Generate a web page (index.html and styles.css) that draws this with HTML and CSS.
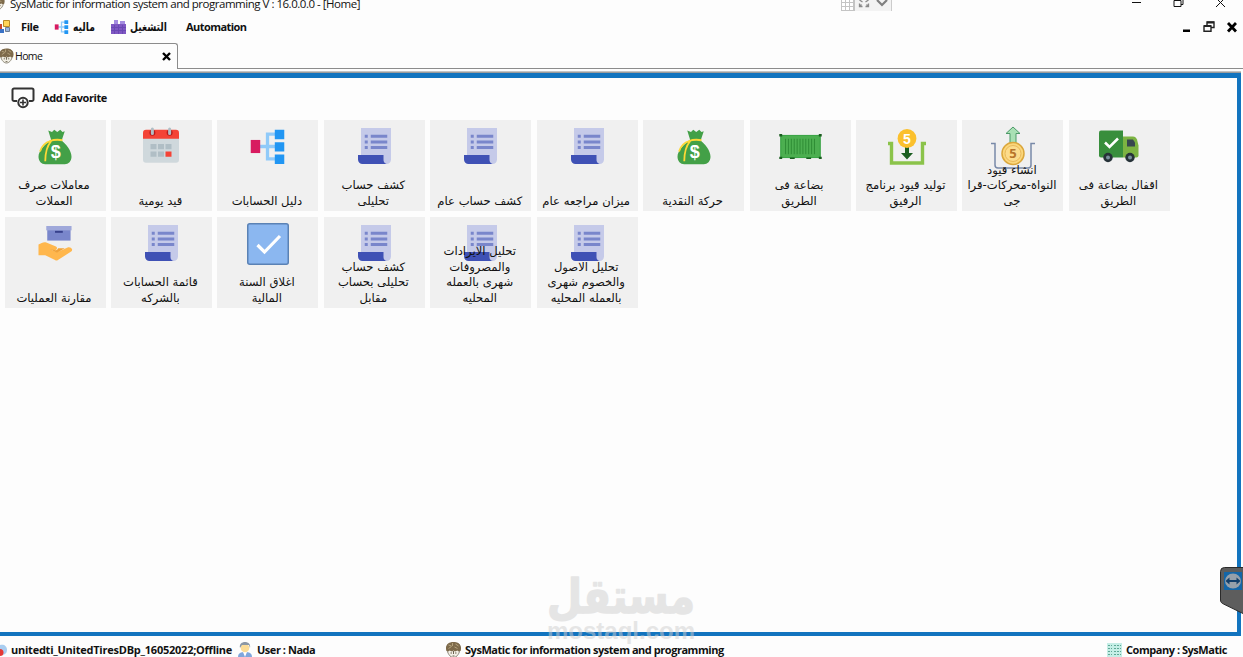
FILE: index.html
```html
<!DOCTYPE html>
<html lang="en">
<head>
  <meta charset="UTF-8" />
  <meta name="viewport" content="width=device-width, initial-scale=1.0" />
  <title>SysMatic - Home</title>
  <link rel="stylesheet" href="styles.css">
</head>
<body>
  <!-- shared icons -->
  <svg class="sprite" width="0" height="0">
    <symbol id="i-bag" viewBox="0 0 48 48">
      <path fill="#43a047" d="M15 2l5 2 3-3 4 3 4-3 3 3 3-1-4 12H19zM19 14h12c8 6 15 15 15 23 0 6-4 10-9 10H11c-5 0-9-4-9-10 0-8 9-17 17-23z"/>
      <path fill="none" stroke="#fdd835" stroke-width="2.400" d="M17 16c6-2 12-2 17-1M19 16c-6 7-8 15-8 27M18 16C11 18 6 23 4 30"/>
      <text x="25" y="39" text-anchor="middle" class="bag-sign">$</text>
    </symbol>
    <symbol id="i-calendar" viewBox="0 0 48 48">
      <path fill="#cfd8dc" d="M0 14h48v29a4 4 0 0 1-4 4H4a4 4 0 0 1-4-4z"/>
      <path fill="#f44336" d="M0 15V7a4 4 0 0 1 4-4h40a4 4 0 0 1 4 4v8z"/>
      <circle cx="12.500" cy="7" r="4" fill="#b71c1c"/><circle cx="35.500" cy="7" r="4" fill="#b71c1c"/>
      <path stroke="#b0bec5" stroke-width="4" stroke-linecap="round" d="M12.500 2v6M35.500 2v6"/>
      <path fill="#b0bec5" d="M10 22h8v7h-8zM20 22h8v7h-8zM30 22h8v7h-8zM10 32h8v7h-8zM20 32h8v7h-8z"/>
      <path fill="#f44336" d="M30 32h8v7h-8z"/>
    </symbol>
    <symbol id="i-tree" viewBox="0 0 48 48">
      <path fill="none" stroke="#90caf9" stroke-width="4.500" d="M12 24h24M36 7H24v34h12"/>
      <path fill="#d81b60" d="M1 15h13v18H1z"/>
      <path fill="#2196f3" d="M34 1h13v13H34zM34 18h13v13H34zM34 35h13v13H34z"/>
    </symbol>
    <symbol id="i-script" viewBox="0 0 44 48">
      <path fill="#c5cae9" d="M4 0h40v42a6 6 0 0 1-6 6H10L4 38z"/>
      <path fill="#3f51b5" d="M0 36h34v6a6 6 0 0 0 4 6H6a6 6 0 0 1-6-6z"/>
      <path fill="#7986cb" d="M9 9h4v4H9zM17 9h22v4H17zM9 16.500h4v4H9zM17 16.500h22v4H17zM9 24h4v4H9zM17 24h22v4H17z"/>
    </symbol>
    <symbol id="i-container" viewBox="0 0 44 28">
      <path fill="#4caf50" stroke="#2e9e3a" stroke-width="1" d="M1.500 2.500h41v23h-41z"/>
      <path stroke="#2e8b34" stroke-width="1" d="M6.500 6v16M9.500 6v16M12.500 6v16M15.500 6v16M18.500 6v16M21.500 6v16M24.500 6v16M27.500 6v16M30.500 6v16M33.500 6v16M36.500 6v16"/>
      <path fill="#1b5e20" d="M0 1h3v2.500H0zM41 1h3v2.500h-3zM0 24.500h3V27H0zM41 24.500h3V27h-3zM11 25.500h5V27h-5zM28 25.500h5V27h-5z"/>
    </symbol>
    <symbol id="i-income" viewBox="0 0 38 36">
      <path fill="none" stroke="#8bc34a" stroke-width="3.400" d="M0 14.500h3.500V34h31V14.500H38"/>
      <path fill="#1b5e20" d="M17 17h4v7h4l-6 6.500L13 24h4z"/>
      <circle cx="19" cy="9.500" r="9.400" fill="#fbc02d"/>
      <text x="19" y="14.500" text-anchor="middle" class="coin-five">5</text>
    </symbol>
    <symbol id="i-outcome" viewBox="0 0 44 44">
      <path fill="none" stroke="#7889a8" stroke-width="1.500" d="M0 17.500h4V39c0 2 1 3 3 3h30c2 0 3-1 3-3V17.500h4"/>
      <path fill="#a9e0b4" stroke="#4c9a68" d="M22 1l7 6.500h-4V17h-6V7.500h-4z"/>
      <circle cx="22" cy="27.500" r="11" fill="#fbd77c" stroke="#dba73c" stroke-width="1.500"/>
      <circle cx="22" cy="27.500" r="8" fill="#fcdc8c" stroke="#e9b95a"/>
      <text x="22" y="32" text-anchor="middle" class="coin-brown">5</text>
    </symbol>
    <symbol id="i-truck" viewBox="0 0 40 32">
      <path fill="#388e3c" d="M2 0h22v27H2a2 2 0 0 1-2-2V2a2 2 0 0 1 2-2z"/>
      <path fill="#7cb342" d="M24 6h10c2 0 3 1 4 3l1.500 6V25a2 2 0 0 1-2 2H24z"/>
      <path fill="#37474f" d="M28 9h6l2 3v4h-8z"/>
      <path fill="none" stroke="#fff" stroke-width="2.500" d="M6 12l4.500 4.500L19 8"/>
      <circle cx="9" cy="27" r="4.700" fill="#263238"/><circle cx="9" cy="27" r="2" fill="#78909c"/>
      <circle cx="31" cy="27" r="4.700" fill="#263238"/><circle cx="31" cy="27" r="2" fill="#78909c"/>
    </symbol>
    <symbol id="i-hand" viewBox="0 0 35 36">
      <path fill="#7986cb" d="M9 3h24v12H9z"/><path fill="#9fa8da" d="M8 0h26v4.500H8z"/>
      <path fill="#37418c" d="M17 5h8v2h-8z"/>
      <path fill="#ffb74d" d="M0 19c3-1 5-3 8-2l10 4c2 1 1 4-1 4l-4-.5 6 2.500 11-5c3-1 6 2 4 4L20 35c-1 .7-2 .7-3 0L7 30H0z"/>
      <path fill="#f0a238" d="M12 24l6 1c1 0 2-1 2-2l7 0-8 4.500z"/>
    </symbol>
    <symbol id="i-check" viewBox="0 0 42 42">
      <rect x=".75" y=".75" width="40.500" height="40.500" rx="2" fill="#8bb7f0" stroke="#5a82b5" stroke-width="1.500"/>
      <path fill="none" stroke="#fff" stroke-width="3.200" d="M10.500 22l7 7L33 13"/>
    </symbol>
    <symbol id="i-face" viewBox="0 0 16 16">
      <path fill="#f3f0e6" stroke="#8c8678" d="M1.500 6c0 5 3 9.500 6.500 9.500s6.500-4.500 6.500-9.500-3-5-6.500-5-6.500 1-6.500 5z"/>
      <path fill="#7d6a4b" d="M1 9C-1 3 3 0 8 0s9 3 7 9l-2 .5-1-1-2.500 1L8 8.500 6.500 9.500 4 8.500l-1 1z"/>
      <path stroke="#cdbb92" fill="none" stroke-width=".7" d="M3 3l3 1M10 2l3 2M7 1v3M3 6.500l3-2M9 5l3 1.500"/>
      <path stroke="#6b6250" fill="none" d="M8 9v3M5 11h1.500M9.500 11H11M7 14h2"/>
    </symbol>
  </svg>

  <header class="titlebar">
    <svg class="title-face"><use href="#i-face"/></svg>
    <span class="title-text">SysMatic for information system and programming V : 16.0.0.0 - [Home]</span>
    <div class="remote-bar">
      <svg width="51" height="11" viewBox="0 0 51 11">
        <path fill="#c4c4c4" d="M0 0h14v11H0z"/>
        <path fill="#fff" d="M1 0h3v2H1zM5 0h3v2H5zM9 0h3v2H9zM1 3h3v3H1zM5 3h3v3H5zM9 3h3v3H9zM1 7h3v3H1zM5 7h3v3H5zM9 7h3v3H9z"/>
        <path fill="none" stroke="#8a8a8a" stroke-width="1.300" d="M18.500 3.500v3h3M27.500 3.500v3h-3M18.500 0l3 2M27.500 0l-3 2M18.500 6.500l2-2M27.500 6.500l-2-2"/>
        <path fill="none" stroke="#808080" stroke-width="2.200" d="M36 0l5 5 5-5"/>
        <path stroke="#ccc" d="M50.500 0v11"/>
      </svg>
    </div>
    <svg class="window-buttons" width="94" height="9" viewBox="0 0 94 9">
      <path fill="none" stroke="#111" d="M0 2.500h9M42 .5h7v6h-7zM44 .5V0M49 4.500h2V0M84 -2l9 9M93-2l-9 9"/>
    </svg>
  </header>

  <nav class="menubar">
    <svg class="menu-app" width="10" height="13" viewBox="0 0 10 13">
      <path fill="#ffd457" stroke="#b98b25" d="M3.500.5h6v6h-6z"/><path fill="#c6452d" d="M0 4h2v6H0z"/>
      <path fill="#3b73c6" d="M0 9h4v4H0z"/><path fill="#9ab7de" stroke="#6f7f96" d="M5.500 7.500h4v4h-4z"/>
    </svg>
    <span class="menu-item m-file">File</span>
    <svg class="menu-tree" width="15" height="14"><use href="#i-tree"/></svg>
    <span class="menu-item ar m-money">ماليه</span>
    <svg class="menu-run" width="15" height="14" viewBox="0 0 15 14">
      <path fill="#a48ce0" d="M3 0h4v4H3zM9 1h5v4H9z"/><path fill="#7e57c2" d="M0 4h15v10H0z"/>
      <path stroke="#6a48b4" d="M0 7.500h15M0 10.500h15M3.500 5v9M7.500 5v9M11.500 5v9"/>
    </svg>
    <span class="menu-item ar m-run">التشغيل</span>
    <span class="menu-item m-auto">Automation</span>
    <svg class="mdi-buttons" width="54" height="12" viewBox="0 0 54 12">
      <path fill="#000" d="M0 8.500h7V11H0z"/>
      <path fill="none" stroke="#222" stroke-width="1.400" d="M21 5h7v5.300h-7zM24 4V1h7v5.500h-2.500"/>
      <path stroke="#222" stroke-width="2" d="M21 5h7M24 1.500h7"/>
      <path stroke="#000" stroke-width="2.800" d="M45 2l8 8.500M53 2l-8 8.500"/>
    </svg>
  </nav>

  <div class="tabs">
    <div class="tab">
      <svg class="tab-face"><use href="#i-face"/></svg>
      <span class="tab-name">Home</span>
      <svg class="tab-close" width="9" height="9" viewBox="0 0 9 9"><path stroke="#000" stroke-width="2.400" d="M1 1l7 7M8 1L1 8"/></svg>
    </div>
  </div>

  <main class="workspace">
    <div class="favorite">
      <svg width="24" height="22" viewBox="0 0 24 22">
        <path fill="none" stroke="#333" stroke-width="2" d="M6 14H3a1.500 1.500 0 0 1-1.500-1.500V3A1.500 1.500 0 0 1 3 1.500h18A1.500 1.500 0 0 1 22.500 3v9.500A1.500 1.500 0 0 1 21 14h-3"/>
        <circle cx="12" cy="15.500" r="4.700" fill="#fff" stroke="#333" stroke-width="2"/>
        <path stroke="#333" stroke-width="1.600" d="M12 12.500v6M9 15.500h6"/>
      </svg>
      <span>Add Favorite</span>
    </div>

    <div class="tiles">
      <div class="tile"><svg class="ic-bag"><use href="#i-bag"/></svg><p>معاملات صرف<br>العملات</p></div>
      <div class="tile"><svg class="ic-calendar"><use href="#i-calendar"/></svg><p>قيد يومية</p></div>
      <div class="tile"><svg class="ic-tree"><use href="#i-tree"/></svg><p>دليل الحسابات</p></div>
      <div class="tile"><svg class="ic-script"><use href="#i-script"/></svg><p>كشف حساب<br>تحليلى</p></div>
      <div class="tile"><svg class="ic-script"><use href="#i-script"/></svg><p>كشف حساب عام</p></div>
      <div class="tile"><svg class="ic-script"><use href="#i-script"/></svg><p>ميزان مراجعه عام</p></div>
      <div class="tile"><svg class="ic-bag"><use href="#i-bag"/></svg><p>حركة النقدية</p></div>
      <div class="tile"><svg class="ic-container"><use href="#i-container"/></svg><p>بضاعة فى<br>الطريق</p></div>
      <div class="tile"><svg class="ic-income"><use href="#i-income"/></svg><p>توليد قيود برنامج<br>الرفيق</p></div>
      <div class="tile"><svg class="ic-outcome"><use href="#i-outcome"/></svg><p>انشاء قيود<br>النواة-محركات-قرا<br>جى</p></div>
      <div class="tile"><svg class="ic-truck"><use href="#i-truck"/></svg><p>اقفال بضاعة فى<br>الطريق</p></div>
      <div class="tile"><svg class="ic-hand"><use href="#i-hand"/></svg><p>مقارنة العمليات</p></div>
      <div class="tile"><svg class="ic-script"><use href="#i-script"/></svg><p>قائمة الحسابات<br>بالشركه</p></div>
      <div class="tile"><svg class="ic-check"><use href="#i-check"/></svg><p>اغلاق السنة<br>المالية</p></div>
      <div class="tile"><svg class="ic-script"><use href="#i-script"/></svg><p>كشف حساب<br>تحليلى بحساب<br>مقابل</p></div>
      <div class="tile"><svg class="ic-script"><use href="#i-script"/></svg><p>تحليل الايرادات<br>والمصروفات<br>شهرى بالعمله<br>المحليه</p></div>
      <div class="tile"><svg class="ic-script"><use href="#i-script"/></svg><p>تحليل الاصول<br>والخصوم شهرى<br>بالعمله المحليه</p></div>
    </div>
  </main>

  <footer class="statusbar">
    <svg class="st-db" width="7" height="14" viewBox="0 0 7 14">
      <path fill="#a9cdf0" d="M0 2c4-1 7 1 7 5s-3 5-7 5z"/><circle cx="0" cy="9.500" r="3.500" fill="#e53935"/>
    </svg>
    <span class="st-text st-offline">unitedti_UnitedTiresDBp_16052022;Offline</span>
    <svg class="st-user" width="14" height="15" viewBox="0 0 14 15">
      <path fill="#7fa6dc" d="M0 15c0-4 3-5 7-5s7 1 7 5z"/><path fill="#fff" d="M5 10h4l-2 5z"/>
      <circle cx="7" cy="6" r="4.300" fill="#fbdc97"/><path fill="#8b97a5" d="M2 6C1 2 4 0 7 0s6 2 5 6l-1-3H4z"/>
    </svg>
    <span class="st-text st-nada">User : Nada</span>
    <svg class="st-face"><use href="#i-face"/></svg>
    <span class="st-text st-sys">SysMatic for information system and programming</span>
    <svg class="st-building" width="15" height="14" viewBox="0 0 15 14">
      <path fill="#c5eee6" d="M0 0h15v14H0z"/>
      <path stroke="#5fa896" stroke-dasharray="2 1" d="M1 2.500h13M1 5.500h13M1 8.500h13M1 11.500h13"/>
      <path stroke="#c5eee6" d="M5.500 0v14M9.500 0v14"/>
    </svg>
    <span class="st-text st-company">Company : SysMatic</span>
  </footer>

  <svg class="watermark" width="156" height="84" viewBox="0 0 156 84">
    <text x="4" y="46" class="wm-ar" textLength="148" lengthAdjust="spacingAndGlyphs">مستقل</text>
    <text x="4" y="72" class="wm-en" textLength="148" lengthAdjust="spacingAndGlyphs">mostaql.com</text>
  </svg>

  <svg class="teamviewer" width="23" height="48" viewBox="0 0 23 48">
    <path fill="#5d5d5d" stroke="#2b2b2b" d="M24 .5H4.500a4 4 0 0 0-4 4V33c0 2 1 3 3 4L24 47z"/>
    <path fill="#1466a8" d="M4 5h18v18H4z"/>
    <ellipse cx="13" cy="14" rx="8" ry="7.500" fill="#96a0aa"/>
    <path fill="#123f6b" d="M5.500 14l4-3.500V13h7v-2.500l4 3.500-4 3.500V15h-7v2.500z"/>
  </svg>
</body>
</html>
```
FILE: styles.css
```css
:root {
  --blue: #1274bf;
  --tile: #f0f0f0;
  --text: #111;
}

* {
  box-sizing: border-box;
}

body {
  margin: 0;
  width: 1243px;
  height: 657px;
  overflow: hidden;
  display: flex;
  flex-direction: column;
  position: relative;
  background: #fdfdfd;
  color: var(--text);
  font-family: 'Open Sans', 'DejaVu Sans', sans-serif;
  font-size: 12px;
}

svg {
  display: block;
  flex-shrink: 0;
}

.sprite {
  display: none;
}

.titlebar {
  display: flex;
  align-items: flex-start;
  height: 12px;
}

.title-face {
  width: 14px;
  height: 14px;
  margin: -4px 0 0 -9px;
}

.title-text {
  width: 360px;
  margin: -4px 0 0 5px;
  font-size: 11.5px;
  line-height: 16px;
  letter-spacing: -0.48px;
  white-space: nowrap;
}

.remote-bar {
  margin-left: 471px;
  background: #f3f3f3;
}

.window-buttons {
  margin-left: auto;
  margin-right: 17px;
}

.menubar {
  display: flex;
  align-items: center;
  height: 30px;
  font-weight: bold;
}

.menu-item {
  white-space: nowrap;
}

.m-file {
  width: 33px;
  margin-left: 11px;
  font-size: 11px;
  letter-spacing: -0.4px;
}

/* narrow the arabic captions, they are set wider than the latin ones */
.ar {
  font-family: 'DejaVu Sans', sans-serif;
  font-size: 12px;
  line-height: 14px;
  direction: rtl;
  transform: scaleX(.77);
  transform-origin: right;
}

.m-money {
  width: 27px;
  margin-left: -1px;
}

.m-run {
  width: 44px;
  margin-left: -3px;
}

.menu-run {
  margin-left: 16px;
}

.m-auto {
  margin-left: 19px;
  font-size: 11px;
  letter-spacing: -0.55px;
}

.mdi-buttons {
  margin-left: auto;
  margin-right: 6px;
}

.tabs {
  height: 27px;
  display: flex;
}

.tabs::after {
  content: "";
  flex: 1;
  height: 26px;
  border-bottom: 1px solid #8c8c8c;
}

.tab {
  width: 178px;
  height: 26px;
  margin-top: 1px;
  display: flex;
  align-items: center;
  border-top: 1px solid #8c8c8c;
  border-right: 1px solid #8c8c8c;
  border-top-right-radius: 3px;
}

.tab-face {
  width: 15px;
  height: 16px;
  margin-left: -1px;
}

.tab-name {
  margin-left: 1px;
  font-size: 10.5px;
  letter-spacing: -0.6px;
}

.tab-close {
  margin-left: auto;
  margin-right: 6px;
}

.workspace {
  height: 567px;
  margin-right: 2px;
  padding-top: 9px;
  border-top: 5px solid var(--blue);
  border-right: 4px solid var(--blue);
  border-bottom: 4px solid var(--blue);
  margin-top: 4px;
  box-shadow: 0 -1px 0 #9c9c9c, 0 -2px 0 #c4c4c4;
  background: #fdfdfd;
}

.favorite {
  display: flex;
  align-items: center;
  gap: 7px;
  height: 22px;
  margin-left: 11px;
  font-size: 11px;
  font-weight: bold;
  letter-spacing: -0.4px;
}

.tiles {
  display: grid;
  grid-template-columns: repeat(11, 101px);
  grid-auto-rows: 91.5px;
  gap: 5.5px 5.45px;
  margin: 11px 0 0 4.500px;
}

.tile {
  display: flex;
  flex-direction: column;
  align-items: center;
  justify-content: flex-end;
  position: relative;
  background: var(--tile);
}

/* long captions run over the icon */
.tile svg {
  position: absolute;
  top: 9px;
}

.tile p {
  position: relative;
  margin: 0 2px 2px 0;
  direction: rtl;
  text-align: center;
  white-space: nowrap;
  font-family: 'DejaVu Sans', sans-serif;
  font-size: 11.6px;
  line-height: 15.6px;
}

.tile .ic-bag { width: 36px; height: 36px; }
.tile .ic-calendar { top: 7px; width: 36px; height: 37px; }
.tile .ic-tree { width: 35px; height: 35px; }
.tile .ic-script { top: 8.5px; width: 33px; height: 36px; }
.tile .ic-container { top: 13px; width: 43px; height: 27px; }
.tile .ic-income { width: 38px; height: 36px; }
.tile .ic-outcome { top: 6px; width: 44px; height: 44px; }
.tile .ic-truck { top: 10px; width: 40px; height: 33px; }
.tile .ic-hand { width: 35px; height: 35px; }
.tile .ic-check { top: 6px; width: 42px; height: 42px; }

.bag-sign {
  font: bold 24px 'Liberation Sans', sans-serif;
  fill: #fff;
}

.coin-five {
  font: bold 14px 'Liberation Sans', sans-serif;
  fill: #fff;
}

.coin-brown {
  font: bold 13px 'Open Sans', sans-serif;
  fill: #b8742a;
}

.statusbar {
  display: flex;
  align-items: center;
  height: 21px;
  padding-top: 6px;
  font-size: 11px;
  font-weight: bold;
  letter-spacing: -0.46px;
  white-space: nowrap;
}

.st-offline {
  width: 222px;
  margin-left: 4px;
  letter-spacing: -0.24px;
}

.st-user {
  margin-left: 5px;
}

.st-nada {
  width: 60px;
  margin-left: 5px;
}

.st-face {
  width: 17px;
  height: 16px;
  margin-left: 128px;
}

.st-sys {
  margin-left: 3px;
}

.st-building {
  margin-left: auto;
}

.st-company {
  width: 101px;
  margin: 0 16px 0 4px;
}

.watermark {
  position: absolute;
  left: 543px;
  top: 567px;
  opacity: .5;
}

.wm-ar {
  font: bold 48px 'DejaVu Sans', sans-serif;
  fill: #cfcfcf;
  stroke: #cfcfcf;
  stroke-width: 1.5px;
  stroke-linejoin: round;
}

.wm-en {
  font: bold 24px 'Liberation Sans', sans-serif;
  fill: #cfcfcf;
}

.teamviewer {
  position: absolute;
  left: 1220px;
  top: 567px;
}
```
